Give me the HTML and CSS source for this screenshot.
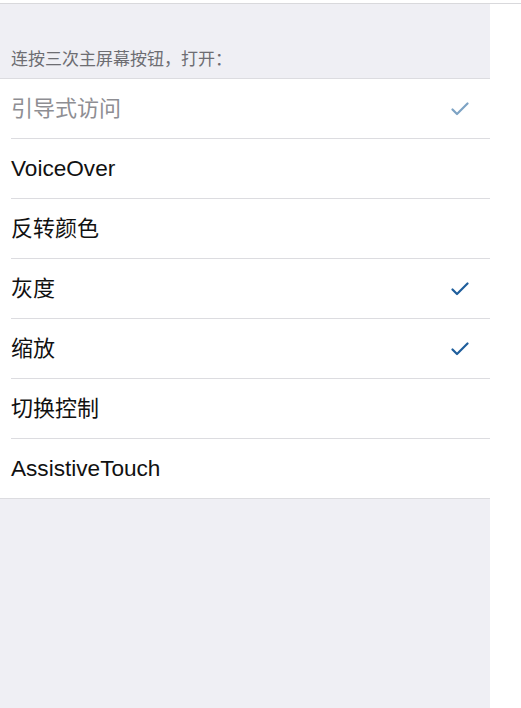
FILE: index.html
```html
<!DOCTYPE html>
<html lang="zh-CN">
<head>
<meta charset="utf-8">
<link rel="stylesheet" href="styles.css">
</head>
<body>
<div class="topbar"></div>
<div class="panel">
  <div class="section-header">连按三次主屏幕按钮，打开：</div>
  <ul class="list">
    <li class="row disabled"><span class="label">引导式访问</span>
      <svg class="check" viewBox="0 0 18 16" width="18" height="16"><path d="M1.5 8.5 L6 13 L16.5 2.5" /></svg>
    </li>
    <li class="row"><span class="label latin">VoiceOver</span></li>
    <li class="row"><span class="label">反转颜色</span></li>
    <li class="row"><span class="label">灰度</span>
      <svg class="check" viewBox="0 0 18 16" width="18" height="16"><path d="M1.5 8.5 L6 13 L16.5 2.5" /></svg>
    </li>
    <li class="row"><span class="label">缩放</span>
      <svg class="check" viewBox="0 0 18 16" width="18" height="16"><path d="M1.5 8.5 L6 13 L16.5 2.5" /></svg>
    </li>
    <li class="row"><span class="label">切换控制</span></li>
    <li class="row"><span class="label latin">AssistiveTouch</span></li>
  </ul>
  <div class="filler"></div>
</div>
</body>
</html>
```
FILE: styles.css
```css
html, body {
  margin: 0;
  padding: 0;
  background: #ffffff;
  height: 100%;
}
body {
  font-family: "Liberation Sans", "Noto Sans CJK SC", sans-serif;
  display: flex;
  flex-direction: column;
}
.topbar {
  height: 3px;
  border-bottom: 1px solid #d9d9dc;
  flex: none;
}
.panel {
  width: 490px;
  flex: 1;
  background: #efeff4;
  display: flex;
  flex-direction: column;
}
.section-header {
  height: 74px;
  box-sizing: border-box;
  padding: 0 0 10px 11px;
  display: flex;
  align-items: flex-end;
  font-size: 17px;
  color: #6d6d72;
  font-family: "Noto Sans CJK SC", sans-serif;
  line-height: 20px;
}
.list {
  list-style: none;
  margin: 0;
  padding: 0 0 0 11px;
  background: #ffffff;
  border-top: 1px solid #dcdce0;
  border-bottom: 1px solid #dcdce0;
}
.row {
  height: 59px;
  display: flex;
  align-items: center;
  justify-content: space-between;
  padding-right: 21px;
  border-bottom: 1px solid #dcdce0;
  font-size: 22px;
  color: #111111;
}
.row:last-child {
  border-bottom: none;
}
.label {
  line-height: 28px;
}
.latin {
  font-size: 22.6px;
}
.disabled .label {
  color: #8e8e93;
}
.check {
  fill: none;
  stroke: #1f5e9c;
  stroke-width: 2.2;
  stroke-linecap: round;
  stroke-linejoin: round;
}
.disabled .check {
  stroke: #7da3c4;
}
.filler {
  flex: 1;
}
```
